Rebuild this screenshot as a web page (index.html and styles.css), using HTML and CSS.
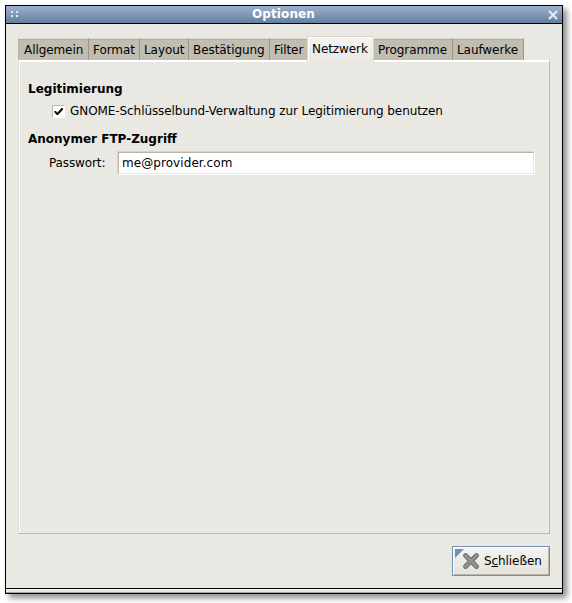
FILE: index.html
```html
<!DOCTYPE html>
<html lang="de">
<head>
<meta charset="utf-8">
<title>Optionen</title>
<link rel="stylesheet" href="styles.css">
</head>
<body>
<div class="window">
  <header class="titlebar">
    <svg class="grip" width="8" height="8" viewBox="0 0 8 8" shape-rendering="crispEdges"><path d="M0 0h2v2H0zM5 0h2v2H5zM0 4h2v2H0zM5 4h2v2H5z" fill="#e4e9f0"/></svg>
    <h1 class="title">Optionen</h1>
    <svg class="close" width="10" height="10" viewBox="0 0 10 10"><path d="M1 1l8 8M9 1L1 9" stroke="#e8edf4" stroke-width="2.1"/></svg>
  </header>
  <main class="content">
    <nav class="tabs">
      <span class="tab general">Allgemein</span>
      <span class="tab format">Format</span>
      <span class="tab layout">Layout</span>
      <span class="tab confirm">Bestätigung</span>
      <span class="tab filter">Filter</span>
      <span class="tab active">Netzwerk</span>
      <span class="tab programs">Programme</span>
      <span class="tab drives">Laufwerke</span>
    </nav>
    <section class="panel">
      <h2 class="heading auth">Legitimierung</h2>
      <label class="check-row">
        <span class="checkbox"><svg width="9" height="9" viewBox="0 0 9 9"><path d="M.5 4H2l1.2 1.8L7.5 1H9v1.8L4 8H2.8L.5 5.5z" fill="#111"/></svg></span>
        <span class="check-label">GNOME-Schlüsselbund-Verwaltung zur Legitimierung benutzen</span>
      </label>
      <h2 class="heading ftp">Anonymer FTP-Zugriff</h2>
      <div class="field-row">
        <span class="field-label">Passwort:</span>
        <div class="entry">me@provider.com</div>
      </div>
    </section>
    <footer class="actions">
      <div class="button">
        <svg class="corner" width="9" height="9" viewBox="0 0 9 9"><path d="M0 0h9L0 9z" fill="#6f8fb3"/></svg>
        <svg class="icon" width="18" height="18" viewBox="0 0 18 18"><path d="M3.5 3.5l11 11M14.5 3.5l-11 11" stroke="#6c6c6a" stroke-width="4.8" stroke-linecap="round"/><path d="M3.5 3.5l11 11M14.5 3.5l-11 11" stroke="#92928f" stroke-width="3" stroke-linecap="round"/></svg>
        <span class="button-label">S<u>c</u>hließen</span>
      </div>
    </footer>
  </main>
  <div class="handle"></div>
</div>
</body>
</html>
```
FILE: styles.css
```css
* { box-sizing: border-box; }
body {
  margin: 0;
  padding: 5px;
  height: 603px;
  overflow: hidden;
  background: #fff;
  color: #000;
  font: 12px/16px "DejaVu Sans", sans-serif;
  white-space: nowrap;
}
.window {
  width: 558px;
  height: 589px;
  border: 1px solid #000;
  background: #e9e8e3;
  box-shadow: 4px 4px 6px rgba(0, 0, 0, .45);
  display: flex;
  flex-direction: column;
}
.titlebar {
  height: 18px;
  flex: none;
  display: flex;
  align-items: center;
  padding: 0 4px 0 5px;
  border-bottom: 1px solid #000;
  background: linear-gradient(#9bb1cf, #647f9e);
}
.title {
  flex: 1;
  margin: 0;
  padding-bottom: 1px;
  font-size: 12px;
  line-height: 16px;
  letter-spacing: .1px;
  text-align: center;
  color: #fff;
}
.close { margin-top: 1px; }
.content {
  flex: 1;
  padding: 13px 12px 0;
  display: flex;
  flex-direction: column;
}
.tabs {
  display: flex;
  align-items: flex-end;
  height: 23px;
  letter-spacing: -.08px;
}
.tab {
  height: 22px;
  padding: 3px 0 0 4px;
  border-top: 1px solid #dddbd3;
  border-right: 1px solid #999588;
  background: #c1bdb1;
  box-shadow: inset 0 1px #b3aea0;
}
.general { width: 71px; padding-left: 5px; border-left: 1px solid #b8b4a7; }
.format { width: 51px; }
.layout { width: 49px; }
.confirm { width: 81px; }
.filter { width: 37px; border-right: 0; }
.active {
  width: 67px;
  height: 26px;
  margin-bottom: -2px;
  padding-top: 4px;
  position: relative;
  border: 1px solid #d8d6ce;
  border-bottom: 0;
  background: linear-gradient(#f5f4f2, #e9e8e3);
  box-shadow: inset 1px 1px #fff;
}
.programs { width: 79px; }
.drives { width: 71px; }
.panel {
  height: 474px;
  border: 1px solid #b9b8b4;
  border-top: 1px solid #fff;
  border-left-color: #dddcd6;
  box-shadow: inset 1px 1px #fff;
  padding: 20px 14px 0 9px;
}
.heading { margin: 0; font-size: 12px; line-height: 16px; }
.check-row {
  display: flex;
  align-items: center;
  height: 16px;
  margin: 6px 0 12px 24px;
}
.checkbox {
  width: 13px;
  height: 13px;
  padding: 1px;
  margin-right: 5px;
  display: flex;
  border: 1px solid #bdb9ad;
  border-right-color: #fff;
  border-bottom-color: #fff;
  background: #fff;
}
.check-label { letter-spacing: -.075px; }
.field-row {
  display: flex;
  align-items: center;
  margin: 4px 0 0 21px;
}
.field-label { width: 68px; letter-spacing: -.12px; }
.entry {
  flex: 1;
  height: 24px;
  padding: 3px 0 0 4px;
  letter-spacing: .07px;
  background: #fff;
  border: 1px solid #d8d5cd;
  border-right-color: #fff;
  border-bottom-color: #fff;
  box-shadow: inset 1px 1px #bab5a8, inset -1px -1px #e9e8e3;
}
.actions {
  display: flex;
  justify-content: flex-end;
  margin-top: 12px;
}
.button {
  position: relative;
  display: flex;
  align-items: center;
  width: 98px;
  height: 30px;
  padding-left: 9px;
  border: 1px solid #6f8fb3;
  background: linear-gradient(#f5f4f2, #e4e2dc);
  box-shadow: inset 1px 1px #fff, inset -1px -1px #b9b5a9;
}
.button-label { letter-spacing: -.08px; }
.corner { position: absolute; left: 2px; top: 2px; }
.icon { margin-right: 4px; }
.handle {
  height: 5px;
  flex: none;
  border-top: 1px solid #000;
  border-bottom: 1px solid #a5a397;
  background: #e9e8e3;
  box-shadow: inset 1px 1px #f8f8f6;
}
```
